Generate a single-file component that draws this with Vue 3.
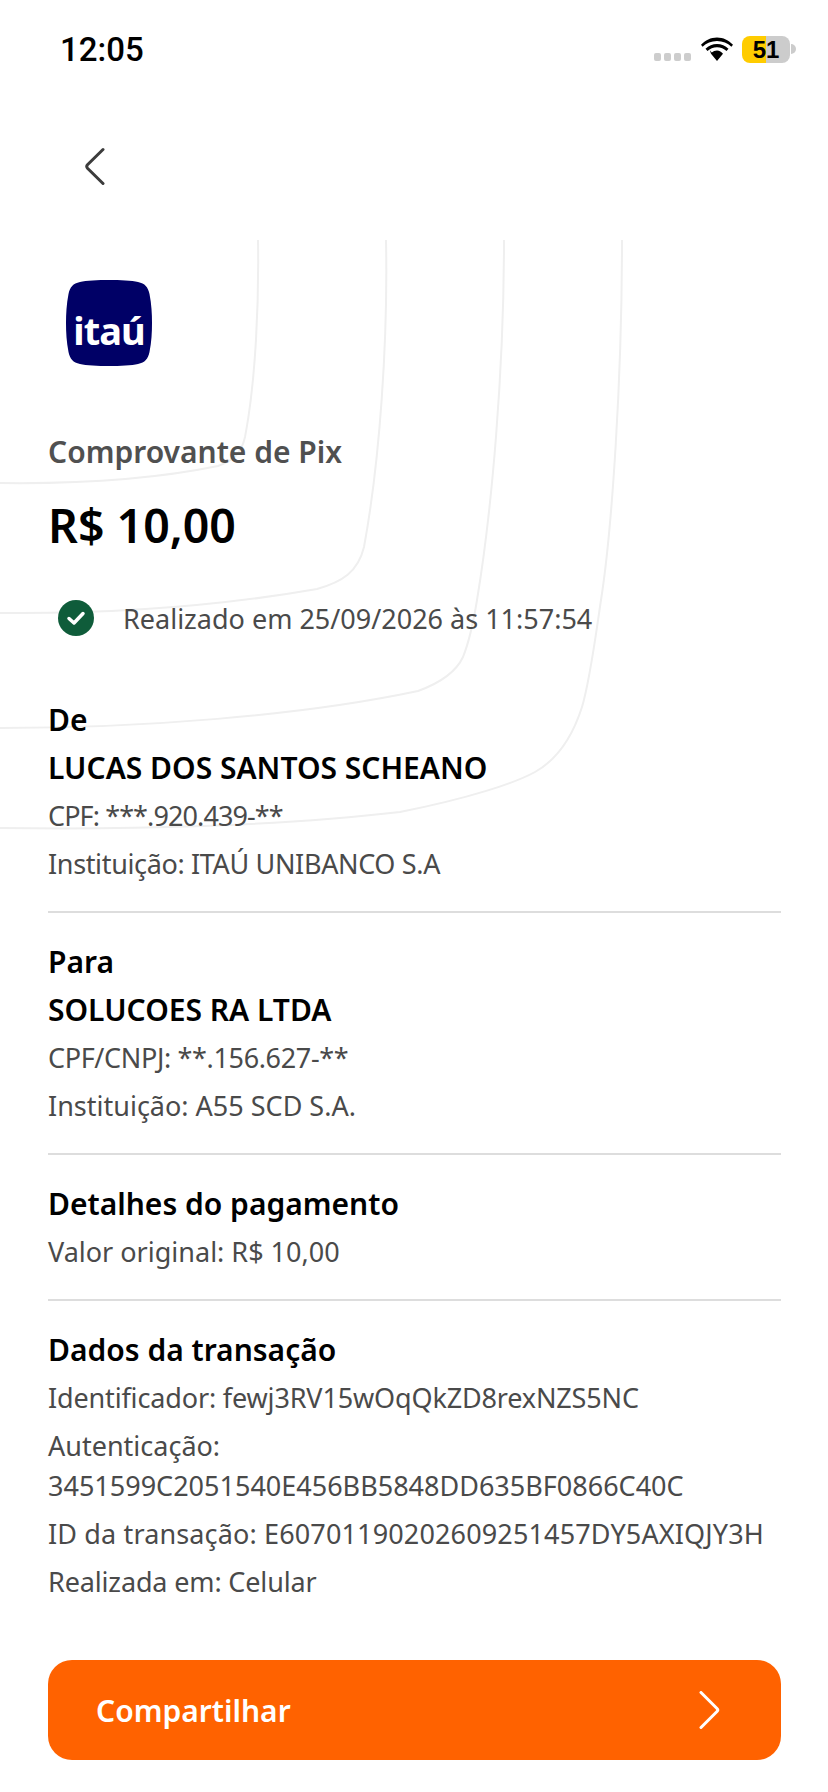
<script setup>
const sections = [
  {
    title: 'De',
    name: 'LUCAS DOS SANTOS SCHEANO',
    rows: [
      { text: 'CPF: ***.920.439-**', cls: 'tight-l' },
      { text: 'Instituição: ITAÚ UNIBANCO S.A', cls: 'tight-m' },
    ],
  },
  {
    title: 'Para',
    name: 'SOLUCOES RA LTDA',
    rows: [
      { text: 'CPF/CNPJ: **.156.627-**', cls: 'tight-m' },
      { text: 'Instituição: A55 SCD S.A.' },
    ],
  },
  {
    title: 'Detalhes do pagamento',
    rows: [{ text: 'Valor original: R$ 10,00' }],
  },
  {
    title: 'Dados da transação',
    rows: [
      { text: 'Identificador: fewj3RV15wOqQkZD8rexNZS5NC', cls: 'tight-s' },
      { text: 'Autenticação:\n3451599C2051540E456BB5848DD635BF0866C40C' },
      { text: 'ID da transação: E60701190202609251457DY5AXIQJY3H', cls: 'loose' },
      { text: 'Realizada em: Celular', cls: 'tight-s' },
    ],
  },
]
</script>

<template>
  <div class="page">
    <svg class="curves" width="828" height="600" viewBox="0 240 828 600" fill="none">
      <path d="M258 240C259 300 256 380 245 437C241 455 232 461 218 466C150 480 80 484 0 483" />
      <path d="M386 240C388 340 380 460 364 547C358 572 342 582 317 589C220 606 110 614 0 613" />
      <path d="M504 240C504 370 492 510 477 600C473 625 469 642 463 657C456 672 440 683 418 691C300 716 140 728 0 728" />
      <path d="M622 240C622 380 612 530 601 600C595 640 590 680 582 707C574 732 560 758 535 772C515 783 470 798 400 812C280 826 130 830 0 828" />
    </svg>

    <header class="status">
      <span class="time">12:05</span>
      <div class="status-right">
        <div class="signal"><i></i><i></i><i></i><i></i></div>
        <svg class="wifi" width="32" height="24" viewBox="0 0 32 24">
          <path d="M16 4C10.400 4 5.300 6.200 1.600 9.800L0 7.800C4.200 3.400 9.800 0.600 16 0.600C22.200 0.600 27.800 3.400 32 7.800L30.400 9.800C26.700 6.200 21.600 4 16 4Z" />
          <path d="M16 10.200C12.300 10.200 9 11.700 6.500 14.100L4.500 11.700C7.600 8.800 11.600 7 16 7C20.400 7 24.400 8.800 27.500 11.700L25.500 14.100C23 11.700 19.700 10.200 16 10.200Z" />
          <path d="M16 13.400C14 13.400 12.200 14.200 10.800 15.400L8.800 13.200 10 16.800 16 24 22 16.800C20.600 14.800 18.400 13.400 16 13.400Z" />
        </svg>
        <div class="battery"><span>51</span></div>
        <div class="battery-tip"></div>
      </div>
    </header>

    <nav class="nav">
      <svg width="22" height="39" viewBox="0 0 22 39" fill="none">
        <path d="M20 2.500L4.500 17.800Q3 19.500 4.500 21.200L20 36.500" />
      </svg>
    </nav>

    <main class="content">
      <div class="logo">
        <svg class="logo-shape" width="86" height="86" viewBox="0 0 86 86">
          <path d="M43 0C54 0 66 .6 72 2C79 3.500 82 7 83.500 14C85.500 24 86 34 86 43C86 52 85.500 62 83.500 72C82 79 79 82.500 72 84C66 85.400 54 86 43 86C32 86 20 85.400 14 84C7 82.500 4 79 2.500 72C.5 62 0 52 0 43C0 34 .5 24 2.500 14C4 7 7 3.500 14 2C20 .6 32 0 43 0Z" />
        </svg>
        <span class="logo-text">itaú</span>
      </div>

      <p class="label">Comprovante de Pix</p>
      <p class="amount">R$ 10,00</p>

      <div class="done">
        <svg width="36" height="36" viewBox="0 0 36 36">
          <circle cx="18" cy="18" r="18" fill="#0f5c3a" />
          <path d="M11 18.500L16 23L25 13.500" fill="none" stroke="#fff" stroke-width="3.500" stroke-linecap="round" stroke-linejoin="round" />
        </svg>
        <span>Realizado em 25/09/2026 às 11:57:54</span>
      </div>

      <section v-for="s in sections" :key="s.title" class="block">
        <h2>{{ s.title }}</h2>
        <h2 v-if="s.name" class="name">{{ s.name }}</h2>
        <p v-for="r in s.rows" :key="r.text" class="row" :class="r.cls">{{ r.text }}</p>
      </section>

      <button class="share">
        <span>Compartilhar</span>
        <svg width="22" height="38" viewBox="0 0 22 38" fill="none">
          <path d="M2 1.500L18 17.500Q19.500 19 18 20.500L2 36.500" />
        </svg>
      </button>
    </main>
  </div>
</template>

<style scoped>
.page {
  position: relative;
  width: 828px;
  height: 1792px;
  overflow: hidden;
  background: #fff;
  font-family: "Noto Sans", "Open Sans", sans-serif;
  color: #000;
}
.curves {
  position: absolute;
  left: 0;
  top: 240px;
}
.curves path {
  stroke: #efefef;
  stroke-width: 2;
}
.status {
  position: relative;
  height: 100px;
  padding: 0 32px 0 60px;
  display: flex;
  justify-content: space-between;
  box-sizing: border-box;
}
.time {
  margin-top: 31px;
  font: 500 33px/38px Roboto, "Liberation Sans", sans-serif;
}
.status-right {
  display: flex;
  align-items: flex-start;
  padding-top: 36px;
}
.signal {
  display: flex;
  gap: 3px;
  margin-top: 17px;
  margin-right: 10px;
}
.signal i {
  width: 7px;
  height: 8px;
  border-radius: 2px;
  background: #cdcdcd;
}
.wifi {
  margin-top: 1px;
  margin-right: 9px;
  fill: #000;
}
.battery {
  width: 48px;
  height: 27px;
  border-radius: 8px;
  background: linear-gradient(90deg, #ffcc00 50%, #cccccc 50%);
  text-align: center;
  font: 700 24px/27px "Liberation Sans", Arial, sans-serif;
}
.battery-tip {
  width: 5px;
  height: 10px;
  margin-top: 8px;
  margin-left: 1px;
  border-radius: 0 5px 5px 0;
  background: #cccccc;
}
.nav {
  height: 180px;
  padding: 47px 0 0 83px;
  box-sizing: border-box;
}
.nav svg path {
  stroke: #3c3c3c;
  stroke-width: 3;
  stroke-linecap: round;
}
.content {
  position: relative;
  padding: 0 47px 0 48px;
}
.logo {
  position: relative;
  width: 86px;
  height: 86px;
  margin-left: 18px;
}
.logo-shape {
  display: block;
  fill: #000066;
}
.logo-text {
  position: absolute;
  left: 0;
  right: 0;
  top: 22px;
  text-align: center;
  color: #fff;
  font-size: 38px;
  font-weight: 700;
  line-height: 56px;
  letter-spacing: -1px;
}
.label {
  margin: 66px 0 0;
  font-size: 30px;
  font-weight: 600;
  line-height: 40px;
  color: #505050;
}
.amount {
  margin: 22px 0 0;
  font-size: 46.500px;
  font-weight: 600;
  line-height: 62px;
}
.done {
  display: flex;
  align-items: center;
  gap: 29px;
  margin: 42px 0 0 10px;
  height: 40px;
  font-size: 27px;
  color: #4a4a4a;
}
.block {
  padding: 29px 0 19px;
  border-bottom: 2px solid #dddddd;
}
.done + .block {
  padding-top: 62px;
}
.block:nth-last-of-type(1) {
  border-bottom: 0;
}
.block h2 {
  margin: 0 0 8px;
  font-size: 30px;
  font-weight: 600;
  line-height: 40px;
}
.block .name {
  margin-top: 8px;
}
.row {
  margin: 0 0 8px;
  font-size: 27px;
  line-height: 40px;
  color: #4a4a4a;
  white-space: pre-line;
}
.tight-l {
  letter-spacing: -0.9px;
}
.tight-m {
  letter-spacing: -0.35px;
}
.tight-s {
  letter-spacing: -0.15px;
}
.loose {
  letter-spacing: 0.14px;
}
.share {
  display: flex;
  align-items: center;
  justify-content: space-between;
  width: 733px;
  height: 100px;
  margin-top: 31px;
  padding: 0 60px 0 48px;
  border: 0;
  border-radius: 24px;
  background: #ff6200;
  color: #fff;
  font-family: inherit;
  font-size: 30px;
  font-weight: 600;
}
.share svg path {
  stroke: #fff;
  stroke-width: 3;
  stroke-linecap: round;
}
</style>
